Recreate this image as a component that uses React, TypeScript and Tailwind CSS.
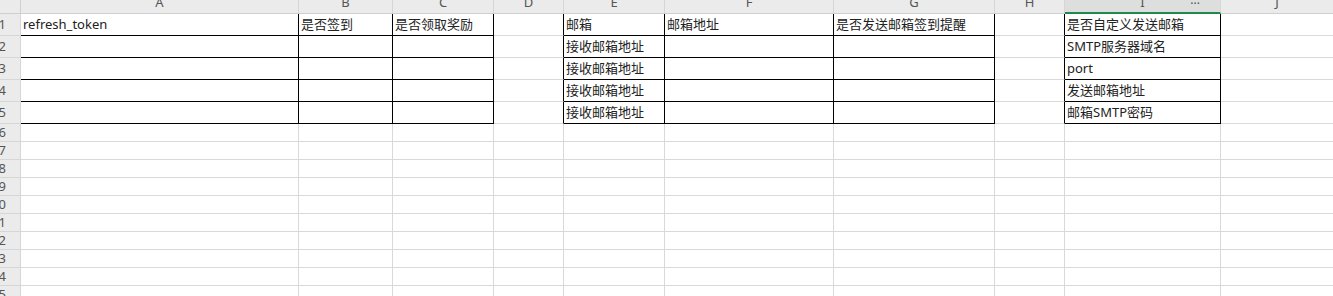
const cols = [
  { key: "A", w: "w-[278px]", box: true },
  { key: "B", w: "w-[94px]", box: true },
  { key: "C", w: "w-[101px]", box: true },
  { key: "D", w: "w-[70px]", box: false },
  { key: "E", w: "w-[101px]", box: true },
  { key: "F", w: "w-[169px]", box: true },
  { key: "G", w: "w-[161px]", box: true },
  { key: "H", w: "w-[70px]", box: false },
  { key: "I", w: "w-[156px]", box: true },
  { key: "J", w: "w-[113px]", box: false },
]

// vertical black line on the right edge of these columns (rows 1-5)
const blackRight = ["A", "B", "C", "D", "E", "F", "G", "H", "I"]

const data: Record<number, Record<string, string>> = {
  1: { A: "refresh_token", B: "是否签到", C: "是否领取奖励", E: "邮箱", F: "邮箱地址", G: "是否发送邮箱签到提醒", I: "是否自定义发送邮箱" },
  2: { E: "接收邮箱地址", I: "SMTP服务器域名" },
  3: { E: "接收邮箱地址", I: "port" },
  4: { E: "接收邮箱地址", I: "发送邮箱地址" },
  5: { E: "接收邮箱地址", I: "邮箱SMTP密码" },
}

const rows = Array.from({ length: 15 }, (_, i) => i + 1)

function Cell({ col, row }: { col: (typeof cols)[number]; row: number }) {
  const inTable = row <= 5
  const right = inTable && blackRight.includes(col.key) ? "border-r-black" : "border-r-[#d9d9d9]"
  const bottom = inTable && col.box ? "border-b-black" : "border-b-[#d9d9d9]"
  const h = inTable ? "h-[22px]" : "h-[18px]"
  return (
    <div className={`${col.w} ${h} shrink-0 border-r border-b ${right} ${bottom} flex items-center px-[2px] overflow-hidden whitespace-nowrap`}>
      <span className="text-[13px] text-[#222]">{data[row]?.[col.key] ?? ""}</span>
    </div>
  )
}

export default function App() {
  return (
    <div className="w-[1333px] h-[296px] overflow-hidden bg-white font-['Noto_Sans','Noto_Sans_CJK_SC',sans-serif]">
      {/* column header */}
      <div className="flex h-[14px]">
        <div className="w-[21px] shrink-0 bg-[#ebebeb] border-r border-b border-[#cfcfcf]" />
        {cols.map((c) => (
          <div
            key={c.key}
            className={`${c.w} shrink-0 relative overflow-hidden border-r border-[#d6d6d6] ${c.key === "I" ? "bg-[#dedede] border-b-2 border-b-[#1f8a4c]" : "bg-[#ebebeb] border-b border-b-[#cfcfcf]"}`}
          >
            <div className="h-[22px] -mt-[8px] flex items-center justify-center text-[13px] text-[#555]">{c.key}</div>
            {c.key === "I" && <span className="absolute right-[20px] -top-[5px] text-[12px] text-[#555]">···</span>}
          </div>
        ))}
      </div>
      {rows.map((r) => (
        <div key={r} className="flex">
          <div className={`w-[21px] shrink-0 ${r <= 5 ? "h-[22px]" : "h-[18px]"} bg-[#ebebeb] border-r border-b border-[#d6d6d6] overflow-hidden flex items-center justify-end pr-[14px]`}>
            <span className="text-[13px] text-[#555] whitespace-nowrap">{r}</span>
          </div>
          {cols.map((c) => (
            <Cell key={c.key} col={c} row={r} />
          ))}
        </div>
      ))}
    </div>
  )
}
